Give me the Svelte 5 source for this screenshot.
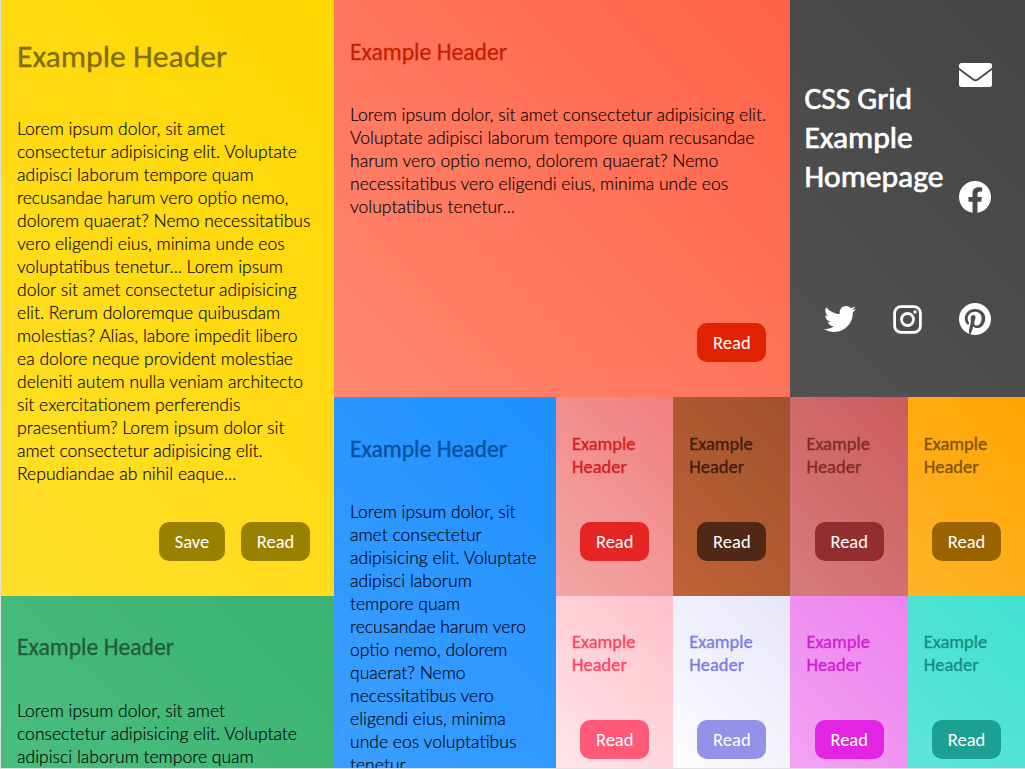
<script>
  const lorem = ['Lorem ipsum dolor, sit amet', 'consectetur adipisicing elit. Voluptate', 'adipisci laborum tempore quam'];
  const cards = [
    { area: 'gold', tag: 'h1', color: '#806c00', btn: '#998100', from: '#ffdf2b', to: '#ffd700',
      lines: [...lorem, 'recusandae harum vero optio nemo,', 'dolorem quaerat? Nemo necessitatibus', 'vero eligendi eius, minima unde eos', 'voluptatibus tenetur... Lorem ipsum', 'dolor sit amet consectetur adipisicing', 'elit. Rerum doloremque quibusdam', 'molestias? Alias, labore impedit libero', 'ea dolore neque provident molestiae', 'deleniti autem nulla veniam architecto', 'sit exercitationem perferendis', 'praesentium? Lorem ipsum dolor sit', 'amet consectetur adipisicing elit.', 'Repudiandae ab nihil eaque...'], buttons: ['Save', 'Read'] },
    { area: 'tomato', tag: 'h2', color: '#c71e00', btn: '#e02200', from: '#ff8770', to: '#ff6347',
      lines: ['Lorem ipsum dolor, sit amet consectetur adipisicing elit.', 'Voluptate adipisci laborum tempore quam recusandae', 'harum vero optio nemo, dolorem quaerat? Nemo', 'necessitatibus vero eligendi eius, minima unde eos', 'voluptatibus tenetur...'], buttons: ['Read'] },
    { area: 'green', tag: 'h2', color: '#1f5d3b', btn: '#246c44', from: '#4fc284', to: '#3cb371',
      lines: [...lorem], buttons: ['Read'] },
    { area: 'blue', tag: 'h2', color: '#00509e', btn: '#005bb5', from: '#47a4ff', to: '#1e90ff',
      lines: ['Lorem ipsum dolor, sit', 'amet consectetur', 'adipisicing elit. Voluptate', 'adipisci laborum', 'tempore quam', 'recusandae harum vero', 'optio nemo, dolorem', 'quaerat? Nemo', 'necessitatibus vero', 'eligendi eius, minima', 'unde eos voluptatibus', 'tenetur...'], buttons: ['Read'] },
    { area: 'coral', color: '#d81a1a', btn: '#e52424', from: '#f4a6a6', to: '#f08080' },
    { area: 'sienna', color: '#3c2011', btn: '#502816', from: '#c06235', to: '#a0522d' },
    { area: 'indian', color: '#832929', btn: '#942e2e', from: '#d67c7c', to: '#cd5c5c' },
    { area: 'orange', color: '#805300', btn: '#996300', from: '#ffb429', to: '#ffa500' },
    { area: 'pink', color: '#ff4060', btn: '#ff5a78', from: '#ffe9ec', to: '#ffc0cb' },
    { area: 'lavender', color: '#7b7be4', btn: '#9292e9', from: '#ffffff', to: '#e6e6fa' },
    { area: 'violet', color: '#d31bd3', btn: '#e325e3', from: '#f3a6f3', to: '#ee82ee' },
    { area: 'turquoise', color: '#188b7f', btn: '#1ba093', from: '#61e7da', to: '#40e0d0' }
  ].map((c) => ({ tag: 'h3', lines: [], buttons: ['Read'], ...c }));
</script>

<main>
  {#each cards as c}
    <article class="{c.area} {c.tag}" style="grid-area:{c.area};background:linear-gradient(45deg,{c.from},{c.to})">
      <svelte:element this={c.tag} class="head" style="color:{c.color}">
        {#if c.tag === 'h3'}Example<br />Header{:else}Example Header{/if}
      </svelte:element>
      {#if c.lines.length}
        <p>{#each c.lines as l}<span>{l}</span>{/each}</p>
      {/if}
      <div class="buttons">
        {#each c.buttons as b}<button style="background:{c.btn}">{b}</button>{/each}
      </div>
    </article>
  {/each}
  <header>
    <h1 class="title"><span>CSS Grid</span><span>Example</span><span>Homepage</span></h1>
    <a class="mail" href="#mail" aria-label="Mail">
      <svg viewBox="0 0 33 24" width="33" height="24"><path fill="#fff" d="M2.500 0H30.500Q33 0 33 2.500V4.800L18.200 15.700Q16.500 16.800 14.800 15.700L0 4.800V2.500Q0 0 2.500 0ZM0 7.100L13.700 17.300Q16.500 19.100 19.300 17.300L33 7.100V21.500Q33 24 30.500 24H2.500Q0 24 0 21.500Z" /></svg>
    </a>
    <a class="fb" href="#facebook" aria-label="Facebook">
      <svg viewBox="0 0 512 512" width="32" height="32"><path fill="#fff" d="M512 256C512 114.6 397.4 0 256 0S0 114.6 0 256c0 127.8 93.6 233.700 216 252.900V330h-65v-74h65v-56.400c0-64.200 38.200-99.600 96.700-99.600 28 0 57.300 5 57.300 5v63h-32.300c-31.800 0-41.700 19.700-41.700 40v48h71l-11.350 74H296v178.900C418.400 489.700 512 383.800 512 256z" /></svg>
    </a>
    <a class="tw" href="#twitter" aria-label="Twitter">
      <svg viewBox="0 0 512 512" width="32" height="32"><path fill="#fff" d="M459.370 151.716c.325 4.548.325 9.097.325 13.645 0 138.720-105.583 298.558-298.558 298.558-59.452 0-114.680-17.219-161.137-47.106 8.447.974 16.568 1.299 25.340 1.299 49.055 0 94.213-16.568 130.274-44.832-46.132-.975-84.792-31.188-98.112-72.772 6.498.974 12.995 1.624 19.818 1.624 9.421 0 18.843-1.300 27.614-3.573-48.081-9.747-84.143-51.980-84.143-102.985v-1.299c13.969 7.797 30.214 12.670 47.431 13.319-28.264-18.843-46.781-51.005-46.781-87.391 0-19.492 5.197-37.360 14.294-52.954 51.655 63.675 129.300 105.258 216.365 109.807-1.624-7.797-2.599-15.918-2.599-24.040 0-57.828 46.782-104.934 104.934-104.934 30.213 0 57.502 12.670 76.670 33.137 23.715-4.548 46.456-13.320 66.599-25.340-7.798 24.366-24.366 44.833-46.132 57.827 21.117-2.273 41.584-8.122 60.426-16.243-14.292 20.791-32.161 39.308-52.628 54.253z" /></svg>
    </a>
    <a class="ig" href="#instagram" aria-label="Instagram">
      <svg viewBox="0 0 29 29" width="29" height="29"><rect x="1.600" y="1.600" width="25.800" height="25.800" rx="6.500" fill="none" stroke="#fff" stroke-width="2.800" /><circle cx="14.500" cy="14.500" r="6" fill="none" stroke="#fff" stroke-width="2.800" /><circle cx="22" cy="7" r="1.700" fill="#fff" /></svg>
    </a>
    <a class="pin" href="#pinterest" aria-label="Pinterest">
      <svg viewBox="0 8 496 496" width="32" height="32"><path fill="#fff" d="M496 256c0 137-111 248-248 248-25.600 0-50.200-3.900-73.400-11.100 10.100-16.500 25.200-43.500 30.800-65 3-11.600 15.400-59 15.400-59 8.100 15.400 31.700 28.500 56.800 28.500 74.800 0 128.700-68.800 128.700-154.300 0-81.900-66.900-143.200-152.900-143.200-107 0-163.900 71.800-163.900 150.100 0 36.400 19.400 81.700 50.300 96.100 4.700 2.200 7.200 1.200 8.300-3.300.8-3.400 5-20.300 6.900-28.100.6-2.500.3-4.700-1.700-7.100-10.100-12.500-18.300-35.300-18.300-56.600 0-54.700 41.400-107.600 112-107.600 60.900 0 103.600 41.500 103.600 100.900 0 67.100-33.900 113.600-78 113.600-24.300 0-42.600-20.100-36.700-44.800 7-29.500 20.500-61.300 20.500-82.600 0-19-10.200-34.900-31.400-34.900-24.900 0-44.900 25.700-44.900 60.200 0 22 7.400 36.800 7.400 36.800s-24.500 103.800-29 123.200c-5 21.400-3 51.600-.9 71.200C65.400 450.900 0 361.100 0 256 0 119 111 8 248 8s248 111 248 248z" /></svg>
    </a>
  </header>
</main>

<style>
  :global(body) { margin: 0; background: #e2e2e2; overflow: hidden; }
  main {
    box-sizing: border-box;
    margin-left: 1px;
    width: 1024px;
    height: 768px;
    overflow: hidden;
    display: grid;
    grid-template-columns: 333px 222px 117.200px 117.200px 117.300px 117.300px;
    grid-template-rows: 397px 199px 198px 198px;
    grid-template-areas:
      'gold tomato tomato tomato top top'
      'gold blue coral sienna indian orange'
      'green blue pink lavender violet turquoise'
      'green blue . . . .';
    font-family: Carlito, Calibri, Lato, sans-serif;
    color: #000;
  }
  article {
    box-sizing: border-box;
    padding: 16px;
    display: flex;
    flex-direction: column;
    min-width: 0;
    min-height: 0;
  }
  .head { font-weight: 400; margin: 0; -webkit-text-stroke: 0.3px currentColor; white-space: nowrap; }
  h1.head { font-size: 31.700px; line-height: 39px; margin-top: 21px; }
  h2.head { font-size: 23.700px; line-height: 29px; margin-top: 21px; }
  h3.head { font-size: 18.500px; line-height: 23px; margin-top: 19px; }
  .turquoise .head, .violet .head, .lavender .head, .pink .head { margin-top: 18px; }
  p { margin: 37px 0 0; font: 300 17.550px/23px Lato, sans-serif; -webkit-text-stroke: 0.15px #000; }
  p span { display: block; white-space: nowrap; }
  .gold p { margin-top: 41px; }
  .green .head { margin-top: 20px; }
  .green p { margin-top: 38px; }
  .buttons { margin-top: auto; padding: 0 8px 19px; display: flex; justify-content: flex-end; gap: 16px; }
  button {
    box-sizing: border-box;
    flex: none;
    width: 69px;
    height: 39px;
    padding: 1px 0 0;
    border: 0;
    border-radius: 10px;
    color: #fff;
    font: 400 18.500px/38px Carlito, Calibri, Lato, sans-serif;
  }
  .gold button:first-child { width: 66px; }
  header {
    grid-area: top;
    box-sizing: border-box;
    padding: 14px 16px 17px;
    display: grid;
    grid-template-columns: repeat(3, 1fr);
    grid-template-rows: repeat(3, 1fr);
    place-items: center;
    background: linear-gradient(45deg, #525252, #444);
    color: #fff;
  }
  .title {
    grid-area: 1 / 1 / 3 / 3;
    margin: 2px 0 0;
    font-size: 31.500px;
    line-height: 39px;
    font-weight: 400;
    -webkit-text-stroke: 0.7px #fff;
  }
  .title span { display: block; }
  a { display: flex; }
  .mail { grid-area: 1 / 3; }
  .fb { grid-area: 2 / 3; }
  .tw { grid-area: 3 / 1; }
  .ig { grid-area: 3 / 2; }
  .pin { grid-area: 3 / 3; }
</style>
